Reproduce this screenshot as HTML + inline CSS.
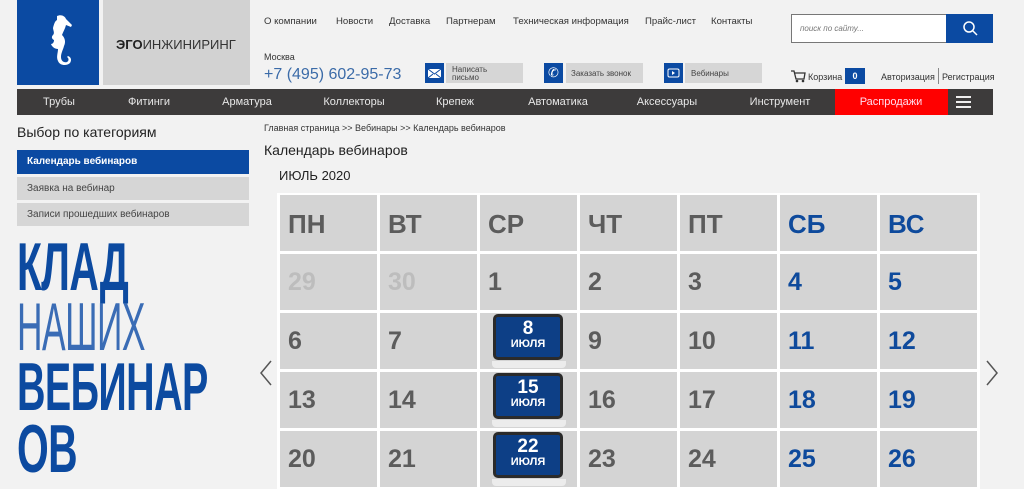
<!DOCTYPE html>
<html><head><meta charset="utf-8">
<style>
*{margin:0;padding:0;box-sizing:border-box}
body{width:1024px;height:489px;overflow:hidden;background:#f2f2f2;font-family:"Liberation Sans",sans-serif;position:relative;color:#333}
.a{position:absolute;white-space:nowrap}
.menu{top:16px;font-size:9.6px;color:#333}
.nav{top:89px;left:17px;width:976px;height:26px;background:#3d3b3b}
.nav span{position:absolute;top:7px;font-size:11px;color:#e8e8e8;transform:translateX(-50%)}
.cell{position:absolute;width:97px;height:56px;background:#d4d4d4}
.cell b{position:absolute;left:8px;top:14px;font-size:25px;color:#5c5c5c}
.cell b.w{color:#0e4a9c}
.cell b.o{color:#bdbdbd}
.bad{position:absolute;left:13px;top:1px;width:70px;height:46px;background:#0d3f86;border:3px solid #2b2b2b;border-radius:5px;color:#fff;text-align:center;font-weight:bold}
.bad i{display:block;font-style:normal;font-size:19px;line-height:19px;margin-top:2px}
.bad u{display:block;text-decoration:none;font-size:11px;line-height:12px}
.base{position:absolute;left:12px;top:48px;width:74px;height:7px;background:#ececec;border-radius:0 0 4px 4px}
.big{left:17px;color:#0c4aa0;font-weight:bold;font-size:68px;transform:scaleX(.6);transform-origin:0 0;line-height:68px;letter-spacing:-1px}
</style></head><body>
<div class="a" style="left:17px;top:0;width:82px;height:85px;background:#0b4aa2">
<svg width="82" height="85" viewBox="0 0 82 85"><path fill="#fff" d="M40 16c4-2 8 0 9 3l6 6-1 2-5-2c-1 4-3 7-4 10 3 3 4 7 2 11-1 4-3 7-3 11 0 4 3 6 6 5 2-1 2-4 0-5l1-1c3 1 4 4 2 7-3 3-10 3-12-2-2-4 0-8 0-12-3 0-6-2-7-5 2 0 3-2 3-4-2-1-3-3-1-5 2-2 0-5 0-7 1-4 2-7 4-8z"/></svg></div>
<div class="a" style="left:103px;top:0;width:147px;height:85px;background:#d2d2d2"></div>
<div class="a" style="left:116px;top:37px;font-size:13px;color:#333"><b style="color:#222">ЭГО</b>ИНЖИНИРИНГ</div>

<div class="a menu" style="left:264px">О компании</div>
<div class="a menu" style="left:336px">Новости</div>
<div class="a menu" style="left:389px">Доставка</div>
<div class="a menu" style="left:446px">Партнерам</div>
<div class="a menu" style="left:513px">Техническая информация</div>
<div class="a menu" style="left:645px">Прайс-лист</div>
<div class="a menu" style="left:711px">Контакты</div>
<div class="a" style="left:791px;top:14px;width:156px;height:29px;background:#fff;border:1px solid #777"></div>
<div class="a" style="left:800px;top:24px;font-size:8px;font-style:italic;color:#777">поиск по сайту...</div>
<div class="a" style="left:946px;top:14px;width:47px;height:29px;background:#0b4aa2">
<svg width="47" height="29"><circle cx="23" cy="13" r="5" fill="none" stroke="#fff" stroke-width="1.5"/><path d="M27 17l4 4" stroke="#fff" stroke-width="1.5"/></svg></div>

<div class="a" style="left:264px;top:52px;font-size:9px;color:#333">Москва</div>
<div class="a" style="left:264px;top:66px;font-size:16px;color:#3b6ba8">+7 (495) 602-95-73</div>

<div class="a" style="left:425px;top:63px;width:19px;height:20px;background:#0b4aa2"><svg width="19" height="20"><rect x="3" y="6" width="13" height="9" fill="#fff"/><path d="M3 6l6.5 5 6.5-5M3 15l5-4M16 15l-5-4" stroke="#0b4aa2" fill="none"/></svg></div>
<div class="a" style="left:446px;top:63px;width:77px;height:20px;background:#d6d6d6;font-size:8px;color:#444;padding:3px 0 0 6px;line-height:8px;white-space:normal">Написать<br>письмо</div>
<div class="a" style="left:544px;top:63px;width:19px;height:20px;background:#0b4aa2;color:#fff;font-size:13px;text-align:center;line-height:20px">✆</div>
<div class="a" style="left:566px;top:63px;width:77px;height:20px;background:#d6d6d6;font-size:8px;color:#444;padding:6px 0 0 5px">Заказать звонок</div>
<div class="a" style="left:664px;top:63px;width:19px;height:20px;background:#0b4aa2"><svg width="19" height="20"><rect x="4" y="6" width="11" height="8" rx="1.5" fill="none" stroke="#fff"/><path d="M8 8l3 2-3 2z" fill="#fff"/></svg></div>
<div class="a" style="left:685px;top:63px;width:77px;height:20px;background:#d6d6d6;font-size:8px;color:#444;padding:6px 0 0 6px">Вебинары</div>

<div class="a" style="left:790px;top:69px"><svg width="16" height="14"><path d="M1 2h3l2 8h8l1-6H5" fill="none" stroke="#333" stroke-width="1.3"/><circle cx="7" cy="12" r="1.3" fill="#333"/><circle cx="13" cy="12" r="1.3" fill="#333"/></svg></div>
<div class="a" style="left:808px;top:72px;font-size:9px;color:#333">Корзина</div>
<div class="a" style="left:845px;top:68px;width:20px;height:16px;background:#0b4aa2;color:#fff;font-size:9px;font-weight:bold;text-align:center;line-height:16px">0</div>
<div class="a" style="left:881px;top:72px;font-size:9px;color:#333">Авторизация</div>
<div class="a" style="left:938px;top:68px;width:1px;height:16px;background:#888"></div>
<div class="a" style="left:942px;top:72px;font-size:9px;color:#333">Регистрация</div>

<div class="a nav">
<span style="left:42px">Трубы</span><span style="left:132px">Фитинги</span><span style="left:230px">Арматура</span><span style="left:337px">Коллекторы</span><span style="left:438px">Крепеж</span><span style="left:541px">Автоматика</span><span style="left:650px">Аксессуары</span><span style="left:763px">Инструмент</span>
<div style="position:absolute;left:818px;top:0;width:113px;height:26px;background:#f00"></div>
<span style="left:874px;color:#fde">Распродажи</span>
<div style="position:absolute;left:939px;top:7px;width:15px;height:12px;border-top:2px solid #eee;border-bottom:2px solid #eee"><div style="margin-top:3px;height:2px;background:#eee"></div></div>
</div>

<div class="a" style="left:17px;top:124px;font-size:14px;color:#222">Выбор по категориям</div>
<div class="a" style="left:17px;top:150px;width:232px;height:24px;background:#0b4aa2;color:#fff;font-size:10px;font-weight:bold;padding:6px 0 0 10px">Календарь вебинаров</div>
<div class="a" style="left:17px;top:177px;width:232px;height:23px;background:#d6d6d6;color:#444;font-size:10px;padding:6px 0 0 10px">Заявка на вебинар</div>
<div class="a" style="left:17px;top:203px;width:232px;height:23px;background:#d6d6d6;color:#444;font-size:10px;padding:6px 0 0 10px">Записи прошедших вебинаров</div>

<div class="a big" style="top:233px">КЛАД</div>
<div class="a big" style="top:293px;font-weight:normal;transform:scaleX(.52);color:#3a6cb5">НАШИХ</div>
<div class="a big" style="top:353px;transform:scaleX(.58)">ВЕБИНАР</div>
<div class="a big" style="top:415px">ОВ</div>

<div class="a" style="left:264px;top:123px;font-size:9px;color:#333">Главная страница &gt;&gt; Вебинары &gt;&gt; Календарь вебинаров</div>
<div class="a" style="left:264px;top:142px;font-size:14px;color:#222">Календарь вебинаров</div>
<div class="a" style="left:279px;top:168px;font-size:13px;color:#222">ИЮЛЬ 2020</div>

<div class="a" style="left:277px;top:193px;width:703px;height:296px;background:#fff"></div>
<div id="cal"></div>

<div class="a" style="left:258px;top:359px"><svg width="16" height="28"><path d="M13 2L3 14l10 12" fill="none" stroke="#555" stroke-width="1.5"/></svg></div>
<div class="a" style="left:984px;top:359px"><svg width="16" height="28"><path d="M3 2l10 12L3 26" fill="none" stroke="#555" stroke-width="1.5"/></svg></div>

<script>
var h=["ПН","ВТ","СР","ЧТ","ПТ","СБ","ВС"];
var rows=[["29","30","1","2","3","4","5"],["6","7","B8","9","10","11","12"],["13","14","B15","16","17","18","19"],["20","21","B22","23","24","25","26"]];
var s="";
var ys=[195,254,313,372,431];
for(var c=0;c<7;c++){s+='<div class="cell" style="left:'+(280+c*100)+'px;top:195px"><b class="'+(c>4?'w':'')+'" style="font-size:26px">'+h[c]+'</b></div>';}
for(var r=0;r<4;r++)for(var c=0;c<7;c++){var v=rows[r][c];var cls=c>4?'w':(r==0&&c<2?'o':'');var inner;
if(v[0]=='B'){inner='<div class="bad"><i>'+v.slice(1)+'</i><u>ИЮЛЯ</u></div><div class="base"></div>';}else inner='<b class="'+cls+'">'+v+'</b>';
s+='<div class="cell" style="left:'+(280+c*100)+'px;top:'+ys[r+1]+'px">'+inner+'</div>';}
document.getElementById('cal').innerHTML=s;
</script>
</body></html>
